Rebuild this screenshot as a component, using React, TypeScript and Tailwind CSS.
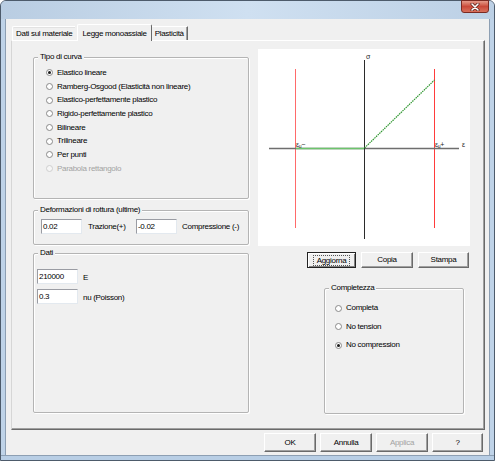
import React from "react";

function Radio({ label, checked = false, disabled = false, h = "h-[13.7px]" }: { label: string; checked?: boolean; disabled?: boolean; h?: string }) {
  return (
    <div className={`flex items-center ${h}`}>
      <span
        className={`w-[7px] h-[7px] rounded-full border flex items-center justify-center ${
          disabled ? "border-[#cfcfcf] bg-[#f6f6f6]" : "border-[#8a8a8a] bg-white"
        }`}
      >
        {checked && <span className="w-[3px] h-[3px] rounded-full bg-[#1a1a1a]" />}
      </span>
      <span className={`ml-[4px] ${disabled ? "text-[#a3a3a3]" : "text-black"}`}>{label}</span>
    </div>
  );
}

function Group({ title, className, children }: { title: string; className: string; children?: React.ReactNode }) {
  return (
    <div
      className={`relative border border-[#b4b4b4] rounded-[2px] shadow-[inset_1px_1px_0_#ffffff,1px_1px_0_#ffffff] ${className}`}
    >
      <span className="absolute top-[-6px] left-[4px] bg-[#f0f0f0] px-[2px] leading-[10px]">{title}</span>
      {children}
    </div>
  );
}

function Field({ value }: { value: string }) {
  return (
    <div className="w-[41px] h-[15px] shrink-0 bg-white border border-[#9a9ca3] border-r-[#e3e9ef] border-b-[#e3e9ef] px-[1px] flex items-center leading-none">
      {value}
    </div>
  );
}

function Btn({ label, w = "w-[51px]", h = "h-[16px]", def = false, disabled = false }: { label: string; w?: string; h?: string; def?: boolean; disabled?: boolean }) {
  return (
    <div
      className={`${w} ${h} shrink-0 flex items-center justify-center bg-[#f0f0f0] border ${
        def
          ? "border-[#222222] shadow-[inset_1px_1px_0_#ffffff,inset_-1px_-1px_0_#808080]"
          : "border-[#ffffff] border-r-[#6a6a6a] border-b-[#6a6a6a] shadow-[inset_-1px_-1px_0_#a0a0a0]"
      } ${disabled ? "text-[#a3a3a3]" : "text-black"}`}
    >
      {def ? (
        <span className="border border-dotted border-[#555] px-[3px] leading-[9px]">{label}</span>
      ) : (
        <span className="leading-none">{label}</span>
      )}
    </div>
  );
}

function Chart() {
  return (
    <div className="w-[212px] h-[197px] bg-white shrink-0">
      <svg width="212" height="197" viewBox="0 0 212 197" className="block">
        <line x1="37.5" y1="20" x2="37.5" y2="179" stroke="#ff6a6a" strokeWidth="1" />
        <line x1="176.5" y1="20" x2="176.5" y2="179" stroke="#ff3b3b" strokeWidth="1" />
        <line x1="11" y1="99.5" x2="201" y2="99.5" stroke="#6e6e6e" strokeWidth="1.6" />
        <line x1="106.5" y1="11" x2="106.5" y2="190" stroke="#2b2b2b" strokeWidth="1" />
        <line x1="38" y1="99.5" x2="106" y2="99.5" stroke="#6cc46c" strokeWidth="1.6" />
        <line x1="106.5" y1="99" x2="176.5" y2="31" stroke="#2e962e" strokeWidth="1.2" strokeDasharray="1.5 0.8" />
        <g fontFamily="'Liberation Sans', Arial, sans-serif" fontSize="7" fill="#222">
          <text x="108" y="10">σ</text>
          <text x="204" y="98">ε</text>
          <text x="38" y="98">
            ε<tspan fontSize="5" dy="1">u</tspan>
            <tspan dy="-1">−</tspan>
          </text>
          <text x="177" y="98">
            ε<tspan fontSize="5" dy="1">u</tspan>
            <tspan dy="-1">+</tspan>
          </text>
        </g>
      </svg>
    </div>
  );
}

export default function App() {
  return (
    <div className="w-[495px] h-[461px] overflow-hidden bg-white">
      <div className="w-[495px] h-[461px] flex flex-col rounded-t-[6px] border border-[#4d5b6b] bg-[#bfd3e8] font-['Liberation_Sans',Arial,sans-serif] text-[8px] tracking-[-0.3px] text-black">
        {/* Title bar */}
        <div className="h-[18px] shrink-0 flex justify-end items-start pr-[5px] rounded-t-[5px] bg-linear-to-r from-[#b9cde2] via-[#cfe0f1] to-[#bcd0e5]">
          <div className="w-[28px] h-[13px] mt-[-1px] rounded-b-[3px] border border-[#7a2a22] bg-linear-to-b from-[#e49a8a] via-[#c9493a] to-[#d8705c] flex items-center justify-center">
            <svg width="10" height="8" viewBox="0 0 10 8">
              <path d="M2 1 L8 7 M8 1 L2 7" stroke="#5a1f18" strokeWidth="3" strokeLinecap="round" />
              <path d="M2 1 L8 7 M8 1 L2 7" stroke="#ffffff" strokeWidth="1.6" strokeLinecap="round" />
            </svg>
          </div>
        </div>
        {/* Middle */}
        <div className="flex flex-1 min-h-0">
          <div className="w-[5px] shrink-0 border-r border-[#8d9fb3]" />
          <div className="w-[483px] h-[436px] shrink-0 bg-[#f0f0f0] flex flex-col">
            {/* Tabs */}
            <div className="flex items-end h-[21px] pl-[6px] pt-[5px] relative z-10">
              <div className="h-[14px] px-[3px] flex items-center border-t border-l border-[#ffffff] shadow-[inset_0_1px_0_#e2e2e2] rounded-tl-[2px]">
                Dati sul materiale
              </div>
              <div className="h-[17px] mb-[-1px] ml-[2px] px-[4px] flex items-start pt-[3px] bg-[#f0f0f0] border-t border-l border-[#ffffff] border-r border-r-[#6a6a6a] rounded-t-[2px]">
                Legge monoassiale
              </div>
              <div className="h-[14px] px-[3px] flex items-center border-t border-[#ffffff] border-r border-r-[#6a6a6a] shadow-[inset_-1px_0_0_#a0a0a0]">
                Plasticità
              </div>
            </div>
            {/* Panel */}
            <div className="ml-[5px] w-[474px] h-[390px] shrink-0 border border-t-[#ffffff] border-l-[#d6d6d6] border-r-[#6a6a6a] border-b-[#6a6a6a] shadow-[inset_-1px_-1px_0_#a0a0a0] flex">
              {/* Left column */}
              <div className="pl-[21px] w-[237px] shrink-0 flex flex-col">
                <Group title="Tipo di curva" className="mt-[16px] h-[142px] w-[216px] pl-[12px] pt-[8px]">
                  <Radio label="Elastico lineare" checked />
                  <Radio label="Ramberg-Osgood (Elasticità non lineare)" />
                  <Radio label="Elastico-perfettamente plastico" />
                  <Radio label="Rigido-perfettamente plastico" />
                  <Radio label="Bilineare" />
                  <Radio label="Trilineare" />
                  <Radio label="Per punti" />
                  <Radio label="Parabola rettangolo" disabled />
                </Group>
                <Group title="Deformazioni di rottura (ultime)" className="mt-[11px] h-[35px] w-[216px] pl-[7px] pt-[8px] flex items-start">
                  <Field value="0.02" />
                  <span className="w-[54px] pl-[6px] h-[15px] flex items-center">Trazione(+)</span>
                  <Field value="-0.02" />
                  <span className="pl-[5px] h-[15px] flex items-center">Compressione (-)</span>
                </Group>
                <Group title="Dati" className="mt-[8px] h-[160px] w-[216px] pl-[3px] pt-[15px] flex flex-col gap-[5px]">
                  <div className="flex items-center">
                    <Field value="210000" />
                    <span className="pl-[5px] pt-[3px]">E</span>
                  </div>
                  <div className="flex items-center">
                    <Field value="0.3" />
                    <span className="pl-[5px] pt-[3px]">nu (Poisson)</span>
                  </div>
                </Group>
              </div>
              {/* Right column */}
              <div className="ml-[9px] flex flex-col">
                <div className="mt-[8px]">
                  <Chart />
                </div>
                <div className="mt-[6px] ml-[49px] flex gap-[5px]">
                  <Btn label="Aggiorna" w="w-[49px]" def />
                  <Btn label="Copia" w="w-[52px]" />
                  <Btn label="Stampa" w="w-[51px]" />
                </div>
                <Group title="Completezza" className="mt-[20px] ml-[66px] w-[140px] h-[126px] pl-[10px] pt-[10px]">
                  <Radio label="Completa" h="h-[18.5px]" />
                  <Radio label="No tension" h="h-[18.5px]" />
                  <Radio label="No compression" checked h="h-[18.5px]" />
                </Group>
              </div>
            </div>
            {/* Bottom buttons */}
            <div className="mt-[3px] pr-[6px] flex justify-end gap-[4px]">
              <Btn label="OK" w="w-[52px]" h="h-[19px]" />
              <Btn label="Annulla" w="w-[52px]" h="h-[19px]" />
              <Btn label="Applica" w="w-[52px]" h="h-[19px]" disabled />
              <Btn label="?" w="w-[51px]" h="h-[19px]" />
            </div>
          </div>
          <div className="w-[5px] shrink-0 border-l border-[#8d9fb3]" />
        </div>
        <div className="h-[5px] shrink-0 border-t border-[#8d9fb3] bg-[#b8cee5]" />
      </div>
    </div>
  );
}
